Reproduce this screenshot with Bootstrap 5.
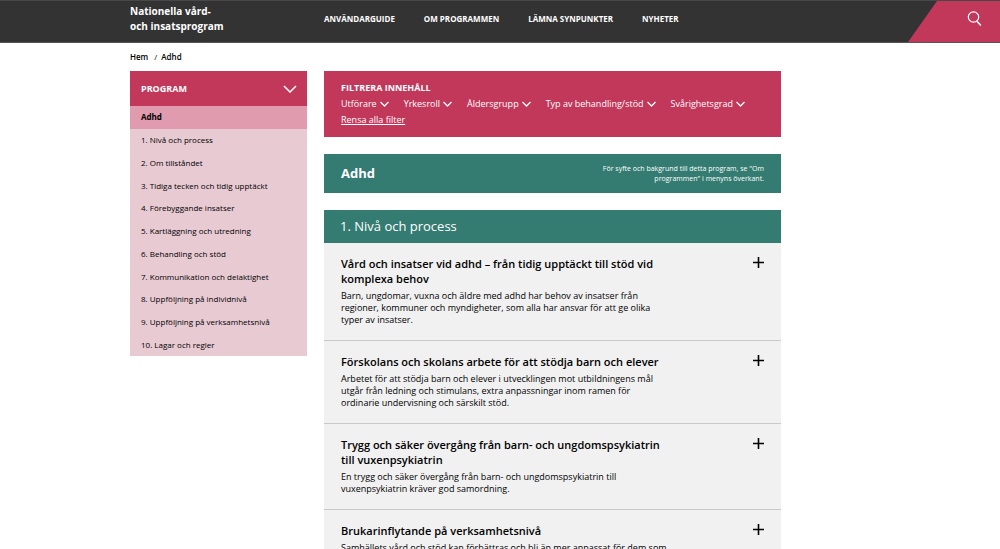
<!DOCTYPE html>
<html lang="sv">
<head>
<meta charset="utf-8">
<meta name="viewport" content="width=device-width, initial-scale=1">
<title>Adhd – Nationella vård- och insatsprogram</title>
<link rel="stylesheet" href="https://cdn.jsdelivr.net/npm/bootstrap@5.3.0/dist/css/bootstrap.min.css">
<style>
  :root { --cerise: #c2385b; --teal: #347b71; --side: 13vw; }
  body { font-family: "Open Sans", sans-serif; font-size: 9px; line-height: 12px; color: #000; }
  a { color: inherit; text-decoration: none; }
  h1, h2, h3, p { margin: 0; }
  svg { display: block; fill: none; stroke: currentColor; flex: none; }
  .shell { margin-left: var(--side); max-width: 651px; }
  .side-col { width: 177px; flex: none; }
  .split { gap: 17px; }
  .topbar { background: #333; color: #fff; height: 43px; border-top: 1px solid #484848; border-bottom: 1px solid #555; }
  .brand { font-size: 10px; line-height: 15px; font-weight: 700; padding-top: 3px; }
  .main-links { gap: 29px; font-size: 8px; font-weight: 700; }
  .search-btn { width: 92px; background: var(--cerise); color: #fff; border: 0; clip-path: polygon(29px 0, 100% 0, 100% 100%, 0 100%); padding: 0 18px 6px 0; }
  .crumbs { font-size: 8px; font-weight: 600; padding: 8px 0; }
  .menu-head { background: var(--cerise); color: #fff; border: 0; height: 35px; padding: 0 10px 0 11px; font-weight: 700; }
  .menu-list { height: 250px; background: #e8cad3; font-size: 8px; }
  .menu-list a { padding: 0 11px; }
  .menu-list .active { background: #e09bae; font-weight: 700; }
  .filter { background: var(--cerise); color: #fff; padding: 9px 17px; height: 66px; }
  .filter h2 { font-size: 9px; line-height: 16px; font-weight: 700; }
  .filter button { background: none; border: 0; padding: 0; color: #fff; line-height: 16px; gap: 3px; }
  .filter-row { gap: 15px; }
  .clear { line-height: 16px; text-decoration: underline; }
  .page-title { background: var(--teal); color: #fff; margin-top: 17px; padding: 0 17px; height: 39px; }
  .page-title h1 { font-size: 13px; font-weight: 700; }
  .page-title p { font-size: 7px; line-height: 10px; font-weight: 500; width: 190px; }
  .section-title { background: var(--teal); color: #fff; margin-top: 17px; padding: 0 16px; font-size: 13px; line-height: 33px; font-weight: 500; }
  .entry { background: #f1f1f1; padding: 13px 17px 14px; border-bottom: 1px solid #c9c9c9; }
  .entry > div { width: 325px; }
  .entry h3 { font-size: 11px; line-height: 15px; font-weight: 600; margin-bottom: 4px; }
  .entry button { background: none; border: 0; padding: 0; color: #000; }
</style>
</head>
<body>
<header class="topbar d-flex">
  <div class="shell d-flex split flex-grow-1">
    <a class="brand side-col" href="#">Nationella vård-<br>och insatsprogram</a>
    <nav class="main-links d-flex align-items-start text-uppercase text-nowrap pt-2 mt-1" aria-label="Huvudmeny">
      <a href="#">Användarguide</a><a href="#">Om programmen</a><a href="#">Lämna synpunkter</a><a href="#">Nyheter</a>
    </nav>
  </div>
  <button class="search-btn ms-auto d-flex align-items-center justify-content-end" type="button" aria-label="Sök">
    <svg width="15" height="15" viewBox="0 0 15 15" stroke-width="1.200"><circle cx="6.500" cy="6" r="5.200"/><path d="M9.800 10l4 4.500" stroke-width="1.500"/></svg>
  </button>
</header>

<div class="shell">
  <nav class="crumbs" aria-label="Sökväg"><a href="#">Hem</a> <span class="px-1 fw-normal">/</span><a href="#">Adhd</a></nav>
  <div class="d-flex split align-items-start">
    <nav class="side-col" aria-label="Program">
      <button class="menu-head w-100 d-flex align-items-center justify-content-between" type="button">PROGRAM
        <svg width="14" height="8" viewBox="0 0 14 8" stroke-width="1.500"><path d="M1 1l6 6 6-6"/></svg>
      </button>
      <div class="menu-list d-flex flex-column">
        <a class="active flex-fill d-flex align-items-center" href="#">Adhd</a>
        <a class="flex-fill d-flex align-items-center" href="#">1. Nivå och process</a>
        <a class="flex-fill d-flex align-items-center" href="#">2. Om tillståndet</a>
        <a class="flex-fill d-flex align-items-center" href="#">3. Tidiga tecken och tidig upptäckt</a>
        <a class="flex-fill d-flex align-items-center" href="#">4. Förebyggande insatser</a>
        <a class="flex-fill d-flex align-items-center" href="#">5. Kartläggning och utredning</a>
        <a class="flex-fill d-flex align-items-center" href="#">6. Behandling och stöd</a>
        <a class="flex-fill d-flex align-items-center" href="#">7. Kommunikation och delaktighet</a>
        <a class="flex-fill d-flex align-items-center" href="#">8. Uppföljning på individnivå</a>
        <a class="flex-fill d-flex align-items-center" href="#">9. Uppföljning på verksamhetsnivå</a>
        <a class="flex-fill d-flex align-items-center" href="#">10. Lagar och regler</a>
      </div>
    </nav>

    <main class="flex-grow-1">
      <section class="filter">
        <h2>FILTRERA INNEHÅLL</h2>
        <div class="filter-row d-flex text-nowrap">
          <button class="d-flex align-items-center" type="button">Utförare <svg width="9" height="6" viewBox="0 0 9 6" stroke-width="1.300"><path d="M.5 1l4 4 4-4"/></svg></button>
          <button class="d-flex align-items-center" type="button">Yrkesroll <svg width="9" height="6" viewBox="0 0 9 6" stroke-width="1.300"><path d="M.5 1l4 4 4-4"/></svg></button>
          <button class="d-flex align-items-center" type="button">Åldersgrupp <svg width="9" height="6" viewBox="0 0 9 6" stroke-width="1.300"><path d="M.5 1l4 4 4-4"/></svg></button>
          <button class="d-flex align-items-center" type="button">Typ av behandling/stöd <svg width="9" height="6" viewBox="0 0 9 6" stroke-width="1.300"><path d="M.5 1l4 4 4-4"/></svg></button>
          <button class="d-flex align-items-center" type="button">Svårighetsgrad <svg width="9" height="6" viewBox="0 0 9 6" stroke-width="1.300"><path d="M.5 1l4 4 4-4"/></svg></button>
        </div>
        <a class="clear" href="#">Rensa alla filter</a>
      </section>

      <div class="page-title d-flex align-items-center justify-content-between">
        <h1>Adhd</h1>
        <p class="text-end">För syfte och bakgrund till detta program, se "Om<br>programmen" i menyns överkant.</p>
      </div>

      <h2 class="section-title">1. Nivå och process</h2>
      <article class="entry d-flex justify-content-between align-items-start">
        <div>
          <h3>Vård och insatser vid adhd – från tidig upptäckt till stöd vid komplexa behov</h3>
          <p>Barn, ungdomar, vuxna och äldre med adhd har behov av insatser från<br>regioner, kommuner och myndigheter, som alla har ansvar för att ge olika<br>typer av insatser.</p>
        </div>
        <button type="button" aria-label="Visa mer"><svg width="11" height="13" viewBox="0 0 11 13" stroke-width="1.600"><path d="M5.500 1v11M0 6.500h11"/></svg></button>
      </article>
      <article class="entry d-flex justify-content-between align-items-start">
        <div>
          <h3>Förskolans och skolans arbete för att stödja barn och elever</h3>
          <p>Arbetet för att stödja barn och elever i utvecklingen mot utbildningens mål<br>utgår från ledning och stimulans, extra anpassningar inom ramen för<br>ordinarie undervisning och särskilt stöd.</p>
        </div>
        <button type="button" aria-label="Visa mer"><svg width="11" height="13" viewBox="0 0 11 13" stroke-width="1.600"><path d="M5.500 1v11M0 6.500h11"/></svg></button>
      </article>
      <article class="entry d-flex justify-content-between align-items-start">
        <div>
          <h3>Trygg och säker övergång från barn- och ungdomspsykiatrin<br>till vuxenpsykiatrin</h3>
          <p>En trygg och säker övergång från barn- och ungdomspsykiatrin till<br>vuxenpsykiatrin kräver god samordning.</p>
        </div>
        <button type="button" aria-label="Visa mer"><svg width="11" height="13" viewBox="0 0 11 13" stroke-width="1.600"><path d="M5.500 1v11M0 6.500h11"/></svg></button>
      </article>
      <article class="entry d-flex justify-content-between align-items-start">
        <div>
          <h3>Brukarinflytande på verksamhetsnivå</h3>
          <p class="text-nowrap">Samhällets vård och stöd kan förbättras och bli än mer anpassat för dem som</p>
        </div>
        <button type="button" aria-label="Visa mer"><svg width="11" height="13" viewBox="0 0 11 13" stroke-width="1.600"><path d="M5.500 1v11M0 6.500h11"/></svg></button>
      </article>
    </main>
  </div>
</div>
<script src="https://cdn.jsdelivr.net/npm/bootstrap@5.3.0/dist/js/bootstrap.bundle.min.js"></script>
</body>
</html>
